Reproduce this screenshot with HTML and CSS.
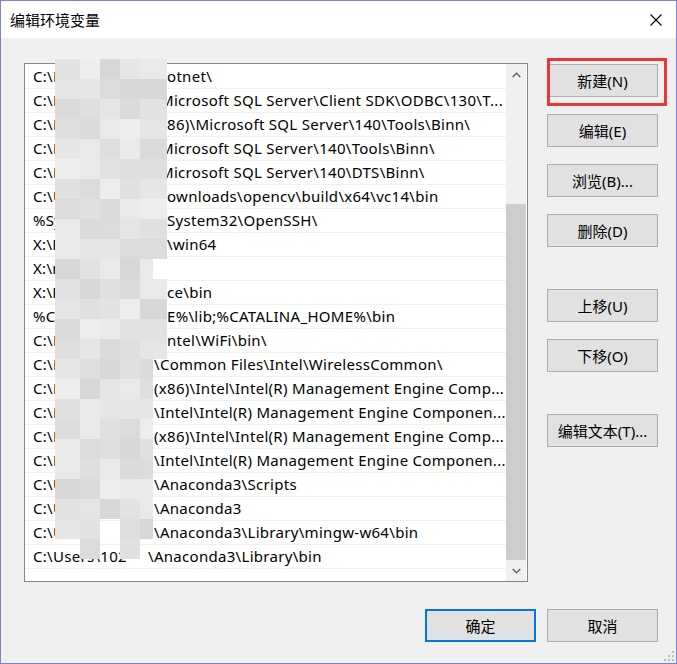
FILE: index.html
```html
<!DOCTYPE html>
<html lang="zh-CN">
<head>
  <meta charset="UTF-8">
  <title>编辑环境变量</title>
  <link rel="stylesheet" href="styles.css">
</head>
<body>

<div class="window">
  <div class="titlebar">
    <span class="title">编辑环境变量</span>
    <svg class="close" width="12" height="12" viewBox="0 0 12 12"><path d="M0.5 0.5L11.5 11.5M11.5 0.5L0.5 11.5" stroke="#000" stroke-width="1.1" fill="none"/></svg>
  </div>

  <div class="content">
    <div class="main">
      <div class="list">
        <div class="rows">
          <div class="row"><span class="pre">C:\Prog</span>otnet\</div>
          <div class="row"><span class="pre m">C:\Prog</span>Microsoft SQL Server\Client SDK\ODBC\130\T...</div>
          <div class="row"><span class="pre">C:\Prog</span>86)\Microsoft SQL Server\140\Tools\Binn\</div>
          <div class="row"><span class="pre m">C:\Prog</span>Microsoft SQL Server\140\Tools\Binn\</div>
          <div class="row"><span class="pre m">C:\Prog</span>Microsoft SQL Server\140\DTS\Binn\</div>
          <div class="row"><span class="pre">C:\Users</span>ownloads\opencv\build\x64\vc14\bin</div>
          <div class="row"><span class="pre">%SystemR</span>System32\OpenSSH\</div>
          <div class="row"><span class="pre">X:\Prog</span>\win64</div>
          <div class="row"><span class="pre">X:\node</span></div>
          <div class="row"><span class="pre">X:\Prog</span>ce\bin</div>
          <div class="row"><span class="pre">%CATALI</span>E%\lib;%CATALINA_HOME%\bin</div>
          <div class="row"><span class="pre">C:\Prog</span>ntel\WiFi\bin\</div>
          <div class="row"><span class="pre s">C:\Prog</span>\Common Files\Intel\WirelessCommon\</div>
          <div class="row"><span class="pre s">C:\Prog</span>(x86)\Intel\Intel(R) Management Engine Comp...</div>
          <div class="row"><span class="pre s">C:\Prog</span>\Intel\Intel(R) Management Engine Componen...</div>
          <div class="row"><span class="pre s">C:\Prog</span>(x86)\Intel\Intel(R) Management Engine Comp...</div>
          <div class="row"><span class="pre s">C:\Prog</span>\Intel\Intel(R) Management Engine Componen...</div>
          <div class="row"><span class="pre s">C:\Users</span>\Anaconda3\Scripts</div>
          <div class="row"><span class="pre s">C:\Users</span>\Anaconda3</div>
          <div class="row"><span class="pre s">C:\Users</span>\Anaconda3\Library\mingw-w64\bin</div>
          <div class="row"><span class="pre t">C:\Users\102</span>\Anaconda3\Library\bin</div>
          <div class="row"></div>
        </div>
        <div class="scrollbar">
          <div class="arrow"><svg width="9" height="6" viewBox="0 0 9 6"><path d="M0.7 5L4.5 1.2L8.3 5" stroke="#606060" stroke-width="1.4" fill="none"/></svg></div>
          <div class="track"><div class="thumb"></div></div>
          <div class="arrow"><svg width="9" height="6" viewBox="0 0 9 6"><path d="M0.7 1L4.5 4.8L8.3 1" stroke="#606060" stroke-width="1.4" fill="none"/></svg></div>
        </div>
        <div class="blur" id="blur"></div>
      </div>

      <div class="side">
        <button class="btn">新建(N)</button>
        <button class="btn">编辑(E)</button>
        <button class="btn">浏览(B)...</button>
        <button class="btn">删除(D)</button>
        <button class="btn gap">上移(U)</button>
        <button class="btn">下移(O)</button>
        <button class="btn gap">编辑文本(T)...</button>
        <div class="mark"></div>
      </div>
    </div>

    <div class="footer">
      <button class="btn default">确定</button>
      <button class="btn">取消</button>
    </div>
  </div>

  <svg class="grip" width="10" height="10" viewBox="0 0 10 10">
    <rect x="8" y="0" width="2" height="2" fill="#bcbcbc"/>
    <rect x="4" y="4" width="2" height="2" fill="#bcbcbc"/>
    <rect x="8" y="4" width="2" height="2" fill="#bcbcbc"/>
    <rect x="0" y="8" width="2" height="2" fill="#bcbcbc"/>
    <rect x="4" y="8" width="2" height="2" fill="#bcbcbc"/>
    <rect x="8" y="8" width="2" height="2" fill="#bcbcbc"/>
  </svg>
</div>

<script>
  // pixelated patch over the private part of the paths
  const cols = 6, lastRow = [23, 24, 22, 24, 23, 14];
  const tones = [226, 233, 219, 237, 222, 229, 215, 234, 224, 230, 218];
  const blur = document.getElementById('blur');
  for (let r = 0; r < 25; r++) {
    for (let c = 0; c < cols; c++) {
      const cell = document.createElement('div');
      if (r <= lastRow[c] && !(c === 5 && r === 10)) {
        const k = Math.min(c, 4);
        const t = tones[(r * 5 + k * 3 + (r * k) % 4) % tones.length];
        cell.style.background = `rgb(${t}, ${t}, ${t})`;
      }
      blur.appendChild(cell);
    }
  }
</script>

</body>
</html>
```

FILE: styles.css
```css
body { margin: 0; font-family: "Noto Sans", "Noto Sans CJK SC", sans-serif; }
.window { width: 677px; height: 664px; box-sizing: border-box; border: 1px solid #7f7fd9; background: #f0f0f0; display: flex; flex-direction: column; position: relative; }
.titlebar { height: 37px; flex-shrink: 0; background: #fff; display: flex; align-items: center; justify-content: space-between; padding: 0 14px 0 9px; }
.title { font-size: 15px; color: #000; font-family: "Noto Sans CJK SC", sans-serif; }
.close { display: block; }

.content { padding: 25px 18px 0 23px; }
.main { display: grid; grid-template-columns: 504px 111px; column-gap: 19px; align-items: start; }

.list { position: relative; height: 519px; box-sizing: border-box; border: 1px solid #828790; background: #fff; display: flex; padding-right: 1px; }
.rows { flex: 1; padding-top: 1px; overflow: hidden; }
.row { height: 23px; line-height: 23px; border-bottom: 1px solid #f0f0f0; padding-left: 8px; font-size: 15px; letter-spacing: 0.3px; color: #000; white-space: nowrap; overflow: hidden; }
.pre { display: inline-block; width: 134px; vertical-align: top; }
.pre.m { width: 127px; }
.pre.s { width: 121px; }
.pre.t { width: 115px; }

.scrollbar { width: 20px; background: #f0f0f0; display: flex; flex-direction: column; }
.arrow { height: 21px; display: flex; align-items: center; justify-content: center; }
.track { flex: 1; }
.thumb { margin-top: 119px; height: 356px; background: #cdcdcd; }

.blur { position: absolute; left: 30px; top: -5px; display: grid; grid-template-columns: 25px 20px 20px 20px 13px 14px; grid-auto-rows: 20px; }

.side { position: relative; display: flex; flex-direction: column; padding-top: 1px; }
.btn { width: 111px; height: 33px; box-sizing: border-box; border: 1px solid #adadad; background: #e1e1e1; color: #000; font-family: "Noto Sans", "Noto Sans CJK SC", sans-serif; font-size: 15px; padding: 0; }
.side .btn + .btn { margin-top: 17px; }
.side .btn.gap { margin-top: 42px; }
.btn.default { border: 2px solid #0078d7; }
.mark { position: absolute; left: 0; top: -5px; width: 120px; height: 48px; box-sizing: border-box; border: 3px solid #ec3636; }

.footer { display: flex; justify-content: flex-end; gap: 11px; margin-top: 27px; }
.grip { position: absolute; right: 2px; bottom: 2px; }
```
